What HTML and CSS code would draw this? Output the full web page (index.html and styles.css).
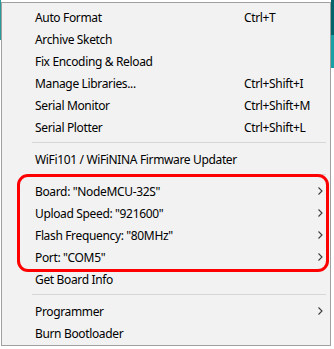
FILE: index.html
```html
<!DOCTYPE html>
<html lang="en">
<head>
    <meta charset="UTF-8">
    <title>Tools menu</title>
    <link rel="stylesheet" href="styles.css">
</head>
<body>
    <div class="screen">
        <div class="edge-left"></div>

        <div class="menu">
            <div class="item"><span class="label">Auto Format</span><span class="key">Ctrl+T</span></div>
            <div class="item"><span class="label">Archive Sketch</span></div>
            <div class="item"><span class="label">Fix Encoding &amp; Reload</span></div>
            <div class="item"><span class="label">Manage Libraries...</span><span class="key">Ctrl+Shift+I</span></div>
            <div class="item"><span class="label">Serial Monitor</span><span class="key">Ctrl+Shift+M</span></div>
            <div class="item"><span class="label">Serial Plotter</span><span class="key">Ctrl+Shift+L</span></div>
            <div class="sep"></div>
            <div class="item"><span class="label">WiFi101 / WiFiNINA Firmware Updater</span></div>
            <div class="sep"></div>

            <!-- the part that was circled -->
            <div class="circled">
                <div class="item"><span class="label">Board: "NodeMCU-32S"</span><svg class="arrow" width="5" height="8" viewBox="0 0 5 8"><polyline points="0.5,0.5 4,4 0.5,7.5" /></svg></div>
                <div class="item"><span class="label">Upload Speed: "921600"</span><svg class="arrow" width="5" height="8" viewBox="0 0 5 8"><polyline points="0.5,0.5 4,4 0.5,7.5" /></svg></div>
                <div class="item"><span class="label">Flash Frequency: "80MHz"</span><svg class="arrow" width="5" height="8" viewBox="0 0 5 8"><polyline points="0.5,0.5 4,4 0.5,7.5" /></svg></div>
                <div class="item"><span class="label">Port: "COM5"</span><svg class="arrow" width="5" height="8" viewBox="0 0 5 8"><polyline points="0.5,0.5 4,4 0.5,7.5" /></svg></div>
            </div>

            <div class="item"><span class="label">Get Board Info</span></div>
            <div class="sep"></div>
            <div class="item"><span class="label">Programmer</span><svg class="arrow" width="5" height="8" viewBox="0 0 5 8"><polyline points="0.5,0.5 4,4 0.5,7.5" /></svg></div>
            <div class="item"><span class="label">Burn Bootloader</span></div>
        </div>

        <div class="edge-right">
            <div class="teal-dark"></div>
            <div class="teal-light"></div>
        </div>
    </div>
</body>
</html>
```

FILE: styles.css
```css
body {
    margin: 0;
    background-color: #ffffff;
    font-family: "Noto Sans", "Open Sans", sans-serif;
    font-size: 12px;
    letter-spacing: -0.35px;
    color: #000000;
}

.screen {
    display: flex;
    align-items: flex-start;
    height: 349px;
}

.edge-left {
    width: 1px;
    height: 40px;
    background-color: #2a9a98;
}

.menu {
    width: 328px;
    margin-top: 2px;
    padding: 3px 0 1px 0;
    background-color: #f2f2f2;
    border: 1px solid #a0a0a0;
}

.item {
    height: 22px;
    display: flex;
    align-items: center;
    padding-left: 33px;
    padding-right: 7px;
}

.label {
    width: 209px;
    white-space: nowrap;
}

.key {
    white-space: nowrap;
}

.arrow {
    margin-left: auto;
    margin-right: 0;
}

.arrow polyline {
    fill: none;
    stroke: #3c3c3c;
    stroke-width: 1.1;
}

.sep {
    height: 1px;
    margin: 4px 4px 5px 30px;
    background-color: #d7d7d7;
}

.circled {
    position: relative;
}

.circled::before {
    content: "";
    position: absolute;
    top: -6px;
    bottom: -4px;
    left: 15px;
    right: 1px;
    border: 3px solid #ff0000;
    border-radius: 11px;
    pointer-events: none;
}

.edge-right {
    width: 3px;
    display: flex;
    flex-direction: column;
}

.teal-dark {
    height: 35px;
    background-color: #006468;
}

.teal-light {
    height: 33px;
    background-color: #17a1a5;
}
```
